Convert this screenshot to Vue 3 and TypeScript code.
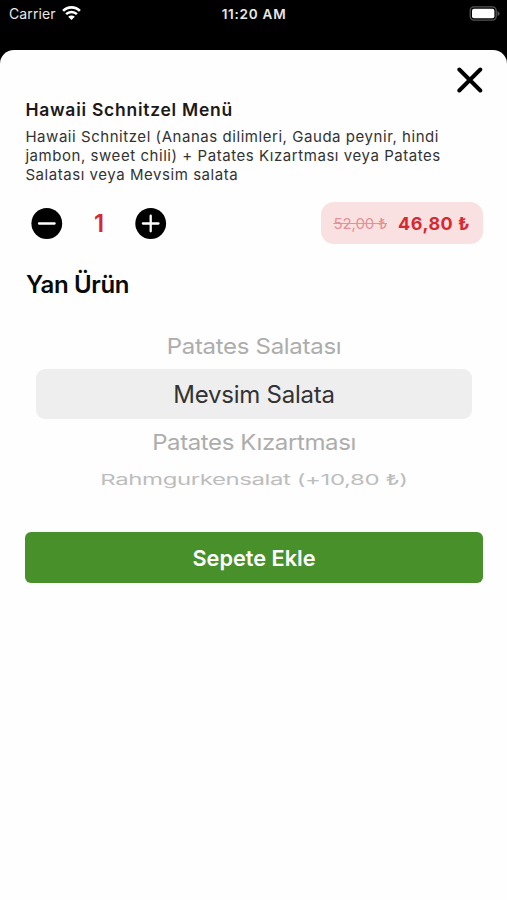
<script setup lang="ts">
import { computed, ref } from 'vue'

interface SideOption {
  label: string
  tilt: 'above' | 'current' | 'below' | 'far'
}

const quantity = ref<number>(1)
const unitPrice = 46.8
const unitOldPrice = 52

const options: SideOption[] = [
  { label: 'Patates Salatası', tilt: 'above' },
  { label: 'Mevsim Salata', tilt: 'current' },
  { label: 'Patates Kızartması', tilt: 'below' },
  { label: 'Rahmgurkensalat (+10,80 ₺)', tilt: 'far' },
]

const money = (value: number): string => value.toFixed(2).replace('.', ',') + ' ₺'
const price = computed(() => money(unitPrice * quantity.value))
const oldPrice = computed(() => money(unitOldPrice * quantity.value))

function change(step: number): void {
  quantity.value = Math.max(1, quantity.value + step)
}
</script>

<template>
  <div class="screen">
    <header class="status">
      <div class="carrier">
        <span class="carrier-name">Carrier</span>
        <svg class="wifi" viewBox="0 0 19 14" width="19" height="14">
          <path d="M1.1 4.9 A11.8 11.8 0 0 1 17.9 4.9" />
          <path d="M4.1 8.2 A7.6 7.6 0 0 1 14.9 8.2" />
          <path class="dot" d="M9.5 14 L6.2 10.8 A4.6 4.6 0 0 1 12.8 10.8 Z" />
        </svg>
      </div>
      <span class="clock">11:20 AM</span>
      <div class="power">
        <svg viewBox="0 0 31 15" width="31" height="15">
          <rect class="shell" x="1.2" y="0.9" width="26" height="13.2" rx="3.8" />
          <rect class="charge" x="3" y="2.7" width="22.4" height="9.6" rx="2" />
          <path class="cap" d="M28.5 5 Q30.6 6 30.6 7.5 Q30.6 9 28.5 10 Z" />
        </svg>
      </div>
    </header>

    <main class="sheet">
      <div class="top">
        <button class="close" aria-label="Kapat">
          <svg viewBox="0 0 26 26" width="26" height="26">
            <path d="M2.3 2.5 L23.3 23.5 M23.3 2.5 L2.3 23.5" />
          </svg>
        </button>
      </div>
      <h1 class="title">Hawaii Schnitzel Menü</h1>
      <p class="desc">
        <span>Hawaii Schnitzel (Ananas dilimleri, Gauda peynir, hindi</span>
        <span>jambon, sweet chili) + Patates Kızartması veya Patates</span>
        <span>Salatası veya Mevsim salata</span>
      </p>

      <div class="order">
        <div class="stepper">
          <button class="round" aria-label="Azalt" @click="change(-1)">
            <svg viewBox="0 0 32 31" width="32" height="31">
              <circle cx="15.8" cy="15.5" r="15.4" />
              <path d="M8 15.5 H23.6" />
            </svg>
          </button>
          <span class="count">{{ quantity }}</span>
          <button class="round" aria-label="Artır" @click="change(1)">
            <svg viewBox="0 0 32 31" width="32" height="31">
              <circle cx="15.7" cy="15.5" r="15.4" />
              <path d="M7.9 15.5 H23.5 M15.7 7.7 V23.3" />
            </svg>
          </button>
        </div>
        <div class="price">
          <s class="old">{{ oldPrice }}</s>
          <strong class="new">{{ price }}</strong>
        </div>
      </div>

      <h2 class="group">Yan Ürün</h2>
      <div class="picker">
        <div v-for="option in options" :key="option.label" class="option" :class="option.tilt">
          <span class="label">{{ option.label }}</span>
        </div>
      </div>

      <button class="submit"><span>Sepete Ekle</span></button>
    </main>
  </div>
</template>

<style>
body {
  margin: 0;
  background: #000;
}
</style>

<style scoped>
.screen {
  display: flex;
  flex-direction: column;
  width: 507px;
  height: 900px;
  overflow: hidden;
  background: #000;
  font-family: Inter, 'Liberation Sans', sans-serif;
  white-space: nowrap;
}
button {
  display: block;
  margin: 0;
  padding: 0;
  border: 0;
  background: none;
  font: inherit;
}
svg {
  display: block;
}
.status {
  display: grid;
  grid-template-columns: 1fr auto 1fr;
  align-items: center;
  height: 28px;
  margin-bottom: 22px;
  padding: 0 7px 0 9px;
  color: #e8e8e8;
  font-size: 13.5px;
}
.carrier {
  display: flex;
  align-items: center;
  gap: 6px;
}
.carrier-name {
  margin-top: -2px;
  font-size: 14px;
  letter-spacing: 0.1px;
}
.wifi {
  margin-top: -3px;
}
.wifi path {
  fill: none;
  stroke: #fff;
  stroke-width: 2.6;
}
.wifi .dot {
  fill: #fff;
  stroke: none;
}
.clock {
  margin-left: -1px;
  font-weight: 600;
  letter-spacing: 0.75px;
}
.power {
  display: flex;
  justify-content: flex-end;
  margin-top: -1px;
}
.shell {
  fill: none;
  stroke: #555;
  stroke-width: 1.3;
}
.charge {
  fill: #fff;
}
.cap {
  fill: #555;
}
.sheet {
  flex: 1;
  padding: 0 24.4px 0 25.4px;
  border-radius: 14px 14px 0 0;
  background: #fefefe;
}
.top {
  display: flex;
  justify-content: flex-end;
  height: 49px;
  padding-top: 17px;
  box-sizing: border-box;
}
.close {
  margin-right: -0.8px;
  height: 26px;
}
.close path {
  fill: none;
  stroke: #000;
  stroke-width: 3.9;
  stroke-linecap: round;
}
.title {
  margin: 0 0 6px;
  color: #1c1919;
  font-size: 17.5px;
  font-weight: 600;
  line-height: 22px;
  letter-spacing: 0.74px;
}
.desc {
  display: flex;
  flex-direction: column;
  margin: 0;
  color: #333;
  font-size: 15px;
  line-height: 19px;
  letter-spacing: 0.55px;
}
.order {
  display: flex;
  justify-content: space-between;
  align-items: center;
  height: 42px;
  margin-top: 18.4px;
}
.stepper {
  display: flex;
  align-items: center;
  padding-left: 5.6px;
}
.round circle {
  fill: #000;
}
.round path {
  fill: none;
  stroke: #fff;
  stroke-width: 2.3;
  stroke-linecap: round;
}
.count {
  width: 72px;
  text-align: center;
  color: #d42a30;
  font-size: 24px;
  font-weight: 600;
}
.price {
  display: flex;
  align-items: center;
  gap: 11px;
  height: 42px;
  padding: 0 12.5px 0 12px;
  border-radius: 13px;
  background: #f9e1e2;
  color: #d62a30;
}
.old {
  color: #e39296;
  font-size: 15px;
  letter-spacing: -0.1px;
}
.new {
  font-size: 18px;
  font-weight: 700;
  letter-spacing: 0.5px;
}
.group {
  margin: 24.6px 0 0 0.6px;
  color: #0a0a0a;
  font-size: 24px;
  font-weight: 600;
  line-height: 32px;
  letter-spacing: -0.35px;
}
.picker {
  display: flex;
  flex-direction: column;
  height: 203px;
  margin: 0 11px;
  padding-top: 21.7px;
  box-sizing: border-box;
}
.option {
  display: flex;
  align-items: center;
  justify-content: center;
  color: #adadad;
  font-size: 24px;
}
.above {
  height: 46px;
  letter-spacing: -0.3px;
}
.current {
  height: 50.6px;
  border-radius: 9px;
  background: #eee;
  color: #333;
  letter-spacing: -0.25px;
}
.current .label {
  padding-top: 1px;
}
.below {
  height: 46px;
  letter-spacing: -0.38px;
}
.far {
  height: 28px;
  color: #bdbdbd;
  letter-spacing: -0.42px;
}
.above .label {
  transform: translateY(0.5px) scaleY(0.91);
}
.below .label {
  transform: scaleY(0.91);
}
.far .label {
  transform: scaleY(0.63);
}
.submit {
  display: flex;
  align-items: center;
  justify-content: center;
  width: 100%;
  height: 50.6px;
  margin-top: 28px;
  border-radius: 6px;
  background: #48912a;
  color: #fff;
  font-size: 21.7px;
  font-weight: 600;
}
.submit span {
  padding-top: 1px;
}
</style>
